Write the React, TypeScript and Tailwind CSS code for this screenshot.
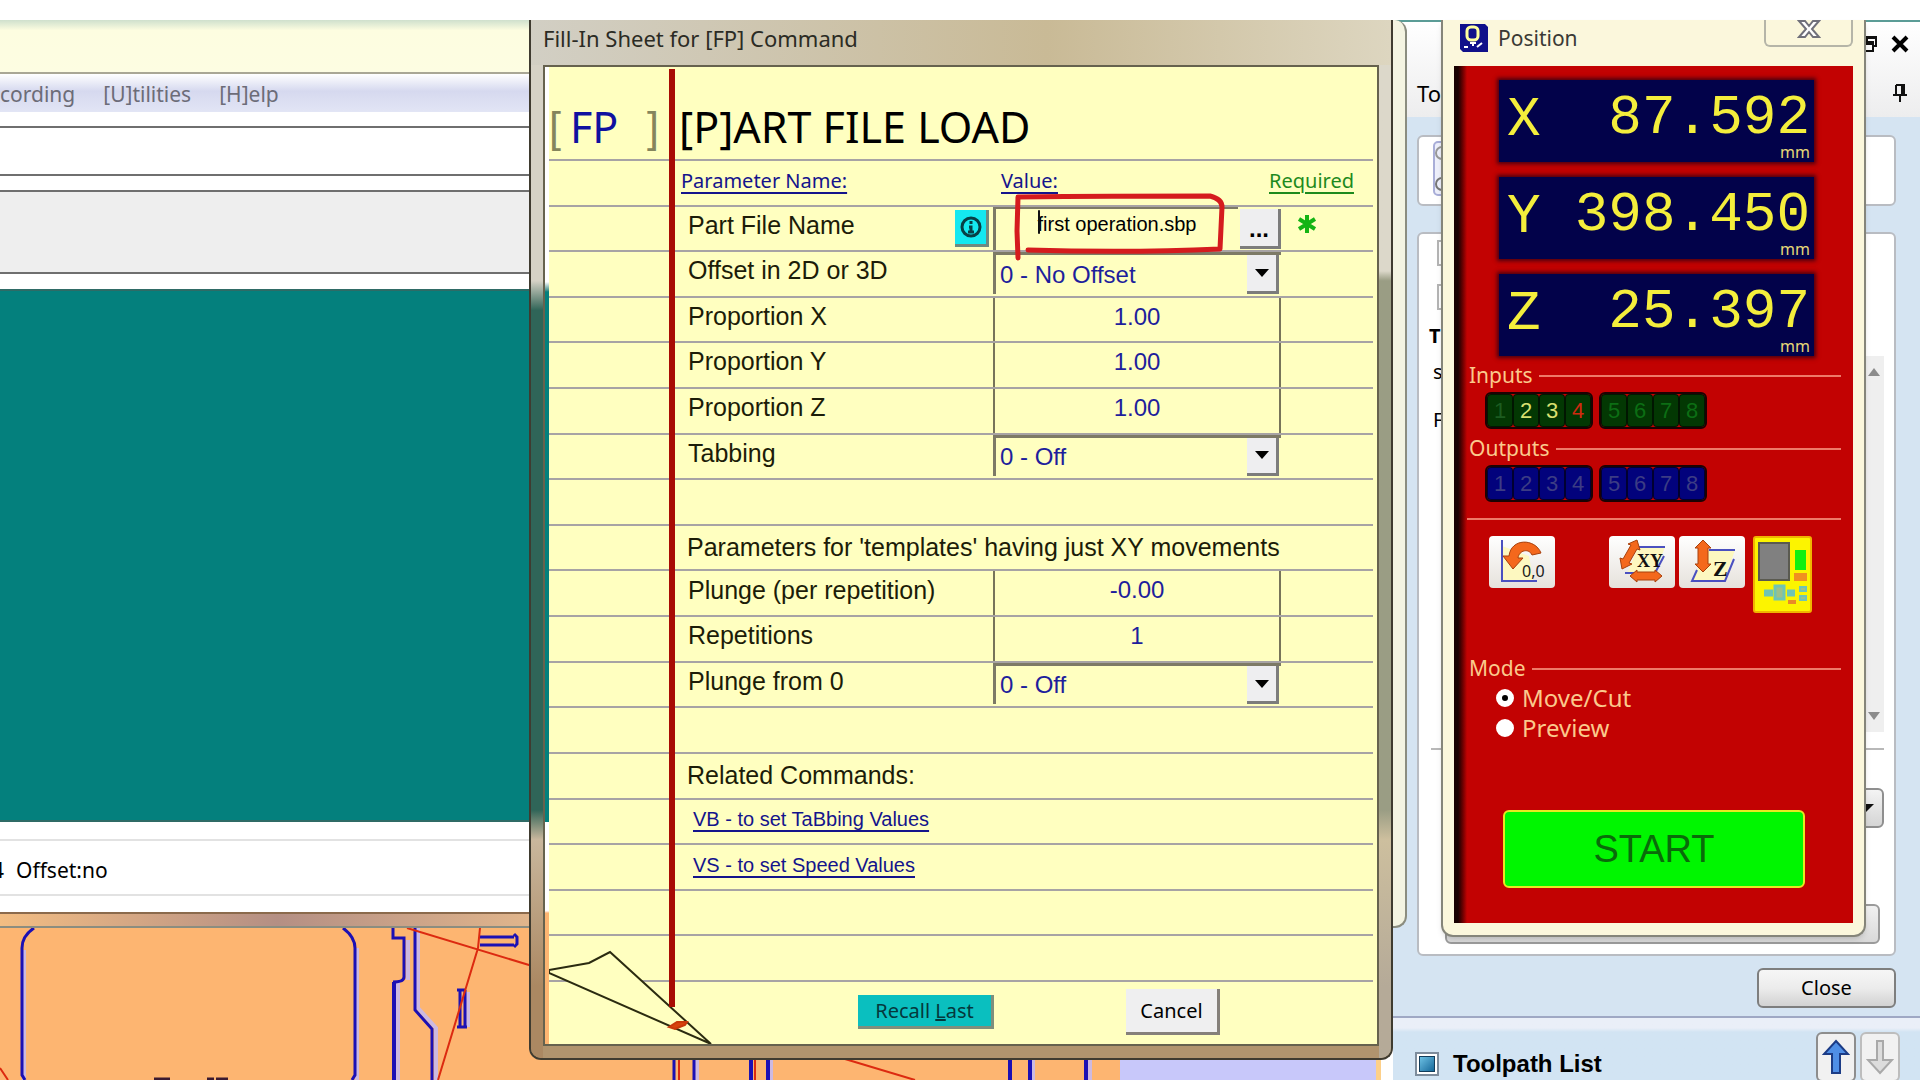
import React, { useState } from 'react';
import clsx from 'clsx';

const NOTO = "font-['Noto_Sans','Open_Sans',sans-serif]";
const ARIAL = "font-['Liberation_Sans',Arial,sans-serif]";
const MONO = "font-['Liberation_Mono',monospace]";

interface FieldRow {
  id: string;
  label: string;
  kind: 'number' | 'select';
  value: string;
}

const MAIN_FIELDS: FieldRow[] = [
  { id: 'offset', label: 'Offset in 2D or 3D', kind: 'select', value: '0 - No Offset' },
  { id: 'prop-x', label: 'Proportion X', kind: 'number', value: '1.00' },
  { id: 'prop-y', label: 'Proportion Y', kind: 'number', value: '1.00' },
  { id: 'prop-z', label: 'Proportion Z', kind: 'number', value: '1.00' },
  { id: 'tabbing', label: 'Tabbing', kind: 'select', value: '0 - Off' },
];

const TEMPLATE_FIELDS: FieldRow[] = [
  { id: 'plunge', label: 'Plunge (per repetition)', kind: 'number', value: '-0.00' },
  { id: 'repetitions', label: 'Repetitions', kind: 'number', value: '1' },
  { id: 'plunge-zero', label: 'Plunge from 0', kind: 'select', value: '0 - Off' },
];

const AXES = [
  { axis: 'X', value: '87.592' },
  { axis: 'Y', value: '398.450' },
  { axis: 'Z', value: '25.397' },
];

/* ---------- Background CAM application ---------- */

const ToolpathDrawing: React.FC = () => (
  <svg className="block h-[152px] w-full shrink-0" viewBox="0 0 1381 152" preserveAspectRatio="xMinYMin slice" fill="none">
    <rect width="1381" height="152" fill="#fdb571" />
    <rect x="1120" width="256" height="152" fill="#c8c8fa" />
    <rect x="1376" width="5" height="152" fill="#fdd08a" />
    {/* Light offset edge beside each vector */}
    <g stroke="#cdb9e0" strokeWidth="4">
      <path d="M24 152V22M357 20V152M398 54V152M408 12V52M418 0V80L436 100V152M468 64V99" />
      <path d="M697 131V152M771 131V152M1033 131V152M1090 131V152" />
    </g>
    <g stroke="#1c10b4" strokeWidth="3">
      <path d="M34 0C25 6 22 12 22 20V147L25 152M343 0C351 6 355 12 355 20V147L352 152" />
      <path d="M393 0V10H404V49Q404 54 393 54" />
      <path d="M394 54V152" strokeWidth="4" />
      <path d="M415 0V82L432 101V152" />
      <path d="M480 9H514M480 17H514M514 6L517 9V16L514 19" />
      <path d="M457 62H466M460 62V98M465 62V98M457 99H467" />
      <path d="M674 131V152M694 131V152" />
      <path d="M751 131V152M768 131V152M1010 131V152M1030 131V152M1086 131V152" strokeWidth="4" />
    </g>
    <g stroke="#dc2a10" strokeWidth="2">
      <path d="M407 0L529 37L549 42M480 0L478 20L438 152M0 140L8 152M845 131L915 152M679 131V152M755 131V152" />
    </g>
    <path d="M154 151H170M207 151H214M216 151H228" stroke="#3a1a30" strokeWidth="3" />
  </svg>
);

const TaskPanel: React.FC = () => (
  <aside className={clsx('flex w-[527px] shrink-0 flex-col bg-[#d5e4f2] text-black', NOTO)}>
    <header className="flex h-[97px] flex-col justify-between border-t-2 border-[#5b9c96] bg-linear-to-b from-white to-[#ededee] pr-2.5 pb-2.5 pl-6">
      <div className="flex items-center justify-end gap-3 pt-3">
        <svg className="h-5 w-4" viewBox="0 0 16 20" fill="none" stroke="#111" strokeWidth="2">
          <path d="M5 7V3H14V12H11M2 8H11V17H2ZM2 10H11M5 4H14" />
        </svg>
        <svg className="h-5 w-5" viewBox="0 0 20 20" stroke="#000" strokeWidth="4">
          <path d="M3 3L17 17M17 3L3 17" />
        </svg>
      </div>
      <div className="flex items-center justify-between text-[22px] leading-7">
        <span>Toolpaths</span>
        <svg className="h-5 w-5" viewBox="0 0 20 20" fill="none" stroke="#111" strokeWidth="2">
          <path d="M6 2H14V11M6 2V11M3 12H17M10 12V19M12 2V11" />
        </svg>
      </div>
    </header>

    <div className="flex flex-1 flex-col gap-[26px] pt-[18px] pr-[24px] pl-6">
      <div className="h-[71px] rounded-md border-2 border-[#b9bcc2] bg-white pt-1 pl-3.5">
        <svg className="h-14 w-10" viewBox="0 0 40 56" fill="none" stroke="#a9aed8" strokeWidth="2">
          <rect x="1" y="1" width="38" height="53" rx="4" fill="#eef0fb" />
          <circle cx="9" cy="12" r="6" stroke="#999" />
          <circle cx="9" cy="43" r="6" stroke="#777" />
          <path d="M9 18V37" stroke="#888" />
        </svg>
      </div>
      <div className="flex flex-1 flex-col rounded-md border-2 border-[#b9bcc2] bg-white pr-2.5 pl-[18px]">
        <div className="flex flex-1">
          <div className="flex-1">
            <div className="mt-1.5 size-[26px] border-2 border-[#b5b5b5]" />
            <div className="mt-[18px] size-[26px] border-2 border-[#b5b5b5]" />
            <p className="mt-3 -ml-2 text-xl font-bold">T</p>
            <p className="mt-2 -ml-1 text-xl">s</p>
            <p className="mt-5 -ml-1 text-xl">F</p>
          </div>
          <div className="mt-[122px] flex w-[20px] flex-col items-center justify-between bg-[#efefef] py-3 text-[#8c8c8c]">
            <svg className="h-2 w-3" viewBox="0 0 12 8"><path d="M6 0L12 8H0Z" fill="currentColor" /></svg>
            <svg className="h-2 w-3" viewBox="0 0 12 8"><path d="M6 8L12 0H0Z" fill="currentColor" /></svg>
          </div>
        </div>
        <div className="mt-4 -ml-1.5 h-0.5 bg-[#b8b8b8]" />
        <div className="mt-[38px] ml-2 flex h-10 items-center justify-end rounded-md border-2 border-[#8f8f8f] bg-linear-to-b from-[#f4f4f4] to-[#d5d5d5] pr-2">
          <svg className="h-2 w-4" viewBox="0 0 16 8"><path d="M8 8L16 0H0Z" fill="#111" /></svg>
        </div>
        <div className="mt-[76px] mr-1 mb-2.5 ml-2 h-10 rounded-md border-2 border-[#9b9b9b] bg-linear-to-b from-[#f1f1f1] to-[#d9d9d9]" />
      </div>
    </div>

    <div className="flex justify-end pt-3 pr-6 pb-2">
      <button className="h-10 w-[139px] rounded-md border-2 border-[#7e7e7e] bg-linear-to-b from-[#f6f6f6] via-[#ececec] to-[#d2d2d2] text-[20px]">
        Close
      </button>
    </div>

    <div className="flex h-[64px] shrink-0 items-start justify-between border-t-2 border-[#9fa8c4] bg-linear-to-b from-[#eaeff8] from-[10px] to-[#d2e4f3] to-[14px] pt-3.5 pr-5 pl-[22px]">
      <div className={clsx('flex items-center gap-3.5 pt-4 text-2xl font-bold', ARIAL)}>
        <span className="flex size-6 items-center justify-center border-2 border-[#7d8c9c] bg-white">
          <span className="size-4 border border-[#123c5a] bg-linear-to-br from-[#6cc1e4] to-[#12699a]" />
        </span>
        <h2>Toolpath List</h2>
      </div>
      <div className="flex gap-1">
        <button aria-label="Move up" className="flex h-[50px] w-10 items-center justify-center rounded-md border-2 border-[#8d8d8d] bg-[#f1f1f1]">
          <svg className="h-9 w-7" viewBox="0 0 28 36">
            <path d="M14 2L26 15H18V34H10V15H2Z" fill="#4f8fe6" stroke="#1c3c86" strokeWidth="2" />
          </svg>
        </button>
        <button aria-label="Move down" className="flex h-[50px] w-10 items-center justify-center rounded-md border-2 border-[#bdbdbd] bg-[#f1f1f1]">
          <svg className="h-9 w-7" viewBox="0 0 28 36">
            <path d="M14 34L26 21H17V2H11V21H2Z" fill="#dcdcdc" stroke="#a9a9a9" strokeWidth="2" />
          </svg>
        </button>
      </div>
    </div>
  </aside>
);

/* ---------- Control software window behind the dialog ---------- */

const ControlWindow: React.FC = () => (
  <section className={clsx('absolute top-5 right-[513px] left-0 flex h-[908px] flex-col overflow-hidden rounded-r-xl border-r-2 border-b-2 border-[#8b8d80] bg-[#f4f4e2] pr-5 text-[21px]', NOTO)}>
    <div className="h-[54px] shrink-0 border-b-2 border-[#a9a795] bg-linear-to-b from-[#cfe0cd] via-[#fdfde0] via-20% to-[#fdfde2]" />
    <nav className="flex h-[38px] shrink-0 items-center gap-7 bg-linear-to-b from-white via-[#d6d9ef] via-45% to-[#e2e5f5] pt-1 text-[#6c6c78]">
      <span>cording</span>
      <span>[U]tilities</span>
      <span>[H]elp</span>
    </nav>
    <div className="flex flex-1 flex-col bg-white pt-[14px]">
      <div className="h-[50px] shrink-0 border-y-2 border-[#6f6f6f] bg-white" />
      <div className="mt-3.5 h-[84px] shrink-0 border-y-2 border-[#6f6f6f] bg-[#eeeeee]" />
      <div className="mt-[15px] flex-1 border-y-2 border-[#2f6b66] bg-[#04807d]" />
      <div className="mt-[17px] mb-4 flex h-[57px] shrink-0 items-center gap-3 border-y-2 border-[#e2e2e2] pt-1.5">
        <span className="-ml-2">4</span>
        <span>Offset:no</span>
      </div>
    </div>
    <div className="h-[14px] shrink-0 border-t-2 border-[#8b6a4c] bg-linear-to-r from-[#f3bd82] via-[#b48f84] via-20% to-[#e5b98c] to-40%" />
  </section>
);

/* ---------- Fill-in sheet dialog ---------- */

const RULED = 'grid min-h-0 grid-cols-[126px_318px_288px_1fr] border-b-2 border-[#a7a3a4]';

const SheetSelect: React.FC<{ id: string; value: string }> = ({ id, value }) => (
  <div className="relative mb-0.5 flex border-t-3 border-l-3 border-[#7d7a66]">
    <select id={id} defaultValue={value} className="w-full appearance-none bg-[#ffffc0] pl-1 text-2xl text-[#1e1e9c] outline-none">
      <option>{value}</option>
    </select>
    <span className="pointer-events-none absolute inset-y-0 right-0.5 flex w-8 items-center justify-center border-r-3 border-b-3 border-[#7c7c7c] bg-[#eeeef0]">
      <svg className="h-2 w-3.5" viewBox="0 0 14 8"><path d="M0 0H14L7 8Z" fill="#000" /></svg>
    </span>
  </div>
);

const SheetRow: React.FC<{ field: FieldRow }> = ({ field }) => (
  <div className={RULED}>
    <label htmlFor={field.id} className="col-start-2 flex items-center pb-1.5 pl-[13px] text-[25px]">
      {field.label}
    </label>
    {field.kind === 'select' ? (
      <SheetSelect id={field.id} value={field.value} />
    ) : (
      <input
        id={field.id}
        defaultValue={field.value}
        className="w-full min-w-0 border-x-2 border-[#77745a] bg-transparent pb-1.5 text-center text-2xl text-[#1e1e9c] outline-none"
      />
    )}
  </div>
);

const FillInSheet: React.FC = () => (
  <section className={clsx('absolute top-5 right-[527px] bottom-5 left-[529px] flex flex-col overflow-hidden rounded-b-xl border-2 border-t-0 border-[#3f3b30] bg-[#b1946e] pb-3 text-[#1c1c08]', NOTO)}>
    <h1 className="h-[45px] shrink-0 bg-linear-to-r from-[#d2cfc4] via-[#c9ba96] via-60% to-[#ddd6c0] px-3 pt-1 text-[22px] leading-7 text-[#2b2b24]">
      Fill-In Sheet for [FP] Command
    </h1>
    <div className="flex min-h-0 flex-1">
      <div className="w-3 bg-linear-to-b from-[#d6d2c6] from-22% via-[#2f6558] via-25% to-[#2f6558] to-76%">
        <div className="mt-[745px] h-full bg-linear-to-b from-[#2f6558] via-[#c9b79d] via-3% to-[#ab8862] to-18%" />
      </div>
      <div className="relative flex min-w-0 flex-1 flex-col border-2 border-[#66624e] bg-[#ffffc0]">
        {/* Strip of the windows behind, left of the page */}
        <div className="absolute inset-y-0 left-0 w-1 bg-linear-to-b from-white from-22% via-[#04807d] via-23% to-[#04807d] to-77%" />
        <div className="absolute bottom-0 left-0 h-[222px] w-1 bg-linear-to-b from-white from-40% to-[#fdb571] to-41%" />

        <div className="mr-1 ml-1 flex h-[94px] shrink-0 items-end border-b-2 border-[#a7a3a4] pb-1 text-[43px] leading-[56px]">
          <div className="flex w-[126px] justify-between pr-[16px] text-[#1010a0]">
            <span className={clsx('text-[#85855c]', ARIAL)}>[</span>
            <span className="w-[68px]">FP</span>
            <span className={clsx('text-[#85855c]', ARIAL)}>]</span>
          </div>
          <h2 className="pl-1 whitespace-nowrap text-black">[P]ART FILE LOAD</h2>
        </div>

        <div className={clsx('mr-1 ml-1 grid min-h-0 flex-1 auto-rows-fr', ARIAL)}>
          <div className={clsx(RULED, NOTO, 'items-center pb-1 text-xl text-[#14148c]')}>
            <span className="col-start-2 pl-1.5 underline underline-offset-4">Parameter Name:</span>
            <span className="pl-2 underline underline-offset-4">Value:</span>
            <span className="-ml-3 text-[#1d8a1d] underline underline-offset-4">Required</span>
          </div>

          <div className={RULED}>
            <div className="col-start-2 flex items-center justify-between pr-1 pl-[13px]">
              <label htmlFor="part-file" className="pb-1.5 text-[25px]">Part File Name</label>
              <button aria-label="Part file info" className="flex h-[37px] w-[34px] items-center justify-center border-r-3 border-b-3 border-[#6f8a80] bg-[#14e8f0]">
                <svg className="size-6" viewBox="0 0 24 24" fill="none" stroke="#073f46" strokeWidth="3">
                  <circle cx="12" cy="12" r="9" />
                  <path d="M12 6V9M10 12H12V17M9 17H15" />
                </svg>
              </button>
            </div>
            <div className="flex">
              <input
                id="part-file"
                defaultValue="first operation.sbp"
                className="min-w-0 flex-1 border-t-2 border-l-3 border-[#7d7a66] bg-transparent pb-2.5 text-center text-xl text-black outline-none"
              />
              <button aria-label="Browse" className="mt-0.5 ml-0.5 h-[40px] w-[41px] shrink-0 border-r-3 border-b-3 border-[#7c7c7c] bg-[#eeeef0] pt-1 text-2xl leading-none font-bold text-black">
                ...
              </button>
            </div>
            <span className="flex items-center pb-2 pl-4">
              <svg className="size-5" viewBox="0 0 20 20" stroke="#14b414" strokeWidth="4">
                <path d="M10 1V19M2 5L18 15M18 5L2 15" />
              </svg>
            </span>
          </div>

          {MAIN_FIELDS.map((field) => (
            <SheetRow key={field.id} field={field} />
          ))}

          <div className={RULED} />
          <div className={RULED}>
            <p className="col-span-3 col-start-2 flex items-center pl-3 text-[25px]">
              Parameters for 'templates' having just XY movements
            </p>
          </div>

          {TEMPLATE_FIELDS.map((field) => (
            <SheetRow key={field.id} field={field} />
          ))}

          <div className={RULED} />
          <div className={RULED}>
            <p className="col-start-2 flex items-center pl-3 text-[25px]">Related Commands:</p>
          </div>
          <div className={RULED}>
            <a href="#vb" className="col-start-2 self-center pb-1 pl-[18px] text-xl text-[#14148c] underline underline-offset-4">
              VB - to set TaBbing Values
            </a>
          </div>
          <div className={RULED}>
            <a href="#vs" className="col-start-2 self-center pb-1 pl-[18px] text-xl text-[#14148c] underline underline-offset-4">
              VS - to set Speed Values
            </a>
          </div>
          <div className={RULED} />
          <div className={RULED} />
        </div>

        <div className="flex h-[62px] shrink-0 items-center pb-0.5 pl-[313px] text-xl">
          <button className="h-[34px] w-[136px] border-r-3 border-b-3 border-[#7f8f7c] bg-[#0abfbf] leading-none text-[#05383c]">
            Recall <span className="underline">L</span>ast
          </button>
          <button className="ml-[132px] h-[46px] w-[94px] border-r-3 border-b-3 border-[#85807a] bg-[#efeff0] text-black">
            Cancel
          </button>
        </div>

        {/* Margin rule, page curl and the marker stroke round the file name */}
        <div className="absolute top-0.5 bottom-[37px] left-[124px] w-1.5 bg-[#a80c04]" />
        <svg className="absolute bottom-0 left-1 h-[94px] w-[164px]" viewBox="0 0 164 94" fill="none">
          <path d="M0 20L40 13L61 2L162 94L0 23Z" fill="#ffffc0" stroke="#2b2b10" strokeWidth="2" />
          <path d="M120 77L128 72H138L136 75L126 79Z" fill="#d8430c" stroke="#c8380a" strokeWidth="2" />
        </svg>
        <div className="absolute bottom-[37px] left-[124px] h-14 w-1.5 bg-[#a80c04]" />
        <svg className="pointer-events-none absolute top-[124px] left-[465px] h-[72px] w-[220px]" viewBox="0 0 220 72" fill="none" stroke="#d51b1e" strokeWidth="5" strokeLinecap="round" strokeLinejoin="round">
          <path d="M8 67L7 40L8 6Q100 5 200 5Q212 8 212 16L210 58Q120 62 18 59" />
          <path d="M29 20V42" stroke="#111" strokeWidth="2" />
        </svg>
      </div>
      <div className="w-3 bg-linear-to-b from-[#dcd8ca] from-21% via-[#9a9d84] via-22% to-[#9a9d84] to-76%">
        <div className="mt-[745px] h-full bg-linear-to-b from-[#9a9d84] via-[#cdbf9e] via-3% to-[#b5aa98] to-18%" />
      </div>
    </div>
  </section>
);

/* ---------- Position window ---------- */

const IoBank: React.FC<{ digits: string[]; cell: string; colours?: Record<string, string>; dim: string }> = ({
  digits,
  cell,
  colours = {},
  dim,
}) => (
  <div className="flex rounded-md border-2 border-[#1c0202]">
    {digits.map((d) => (
      <span
        key={d}
        className={clsx('flex h-[33px] w-[26px] items-center justify-center rounded-sm border border-black/60 text-[22px]', ARIAL, cell, colours[d] || dim)}
      >
        {d}
      </span>
    ))}
  </div>
);

const Legend: React.FC<{ text: string }> = ({ text }) => (
  <div className="flex h-7 items-center gap-1.5 pr-3 pl-0.5 text-[21px] text-[#fbc98c]">
    <span>{text}</span>
    <span className="h-0.5 flex-1 bg-[#ee7a68]" />
  </div>
);

const PositionWindow: React.FC = () => {
  const [mode, setMode] = useState('cut');

  return (
    <section className={clsx('absolute top-5 right-[54px] flex w-[425px] flex-col rounded-b-xl border-2 border-t-0 border-[#85857a] bg-[#fbf7dc] px-[11px] pb-3 shadow-md', NOTO)}>
      <header className="flex h-[46px] items-start justify-between">
        <div className="flex items-center gap-2.5 pt-1 pl-1.5 text-[21px] text-[#3a3a35]">
          <svg className="size-7" viewBox="0 0 28 28" fill="none">
            <path d="M0 0H25L28 3V28H3L0 25Z" fill="#10108a" />
            <rect x="7" y="3" width="11" height="13" rx="4" stroke="#ffffa0" strokeWidth="3" />
            <path d="M10 19H16M13 19V22M4 23H8M17 23L22 19" stroke="#fff" strokeWidth="2" />
          </svg>
          <h1 className="leading-7">Position</h1>
        </div>
        <button aria-label="Close position window" className="flex h-[27px] w-[89px] justify-center rounded-b-md border-2 border-t-0 border-[#b5b5a8]">
          <svg className="h-5 w-6" viewBox="0 0 24 20">
            <path d="M2 1H8L12 6L16 1H22L15 9L22 17H16L12 12L8 17H2L9 9Z" fill="#fff" stroke="#70707a" strokeWidth="2" />
          </svg>
        </button>
      </header>

      <div className="bg-[#c20202] bg-linear-to-r from-[#180000] from-[4px] to-[#c20202] to-[13px] pl-[13px]">
        <div className="flex flex-col gap-[15px] pt-3.5 pr-[39px] pl-8">
          {AXES.map(({ axis, value }) => (
            <div key={axis} className="h-[82px] bg-[#02024a] pt-1.5 pr-1 pl-2 shadow-[0_0_4px_2px_#4a0010]">
              <div className={clsx('flex h-[58px] justify-between text-[56px] leading-none text-[#f4ee3c]', MONO)}>
                <span className="pt-1.5">{axis}</span>
                <span className="pt-1">{value}</span>
              </div>
              <p className="text-right text-base leading-4 text-[#e6d878]">mm</p>
            </div>
          ))}
        </div>

        <div className="pt-1.5">
          <Legend text="Inputs" />
          <div className="flex gap-1.5 pt-0.5 pl-[18px]">
            <IoBank digits={['1', '2', '3', '4']} cell="bg-[#033803]" dim="text-[#1c5c20]" colours={{ '2': 'text-[#d8e070]', '3': 'text-[#d8e070]', '4': 'text-[#d02a10]' }} />
            <IoBank digits={['5', '6', '7', '8']} cell="bg-[#033803]" dim="text-[#0c6e14]" />
          </div>
        </div>
        <div className="pt-1.5">
          <Legend text="Outputs" />
          <div className="flex gap-1.5 pt-0.5 pl-[18px]">
            <IoBank digits={['1', '2', '3', '4']} cell="bg-[#02027c]" dim="text-[#3c3c84]" />
            <IoBank digits={['5', '6', '7', '8']} cell="bg-[#02027c]" dim="text-[#3c3c84]" />
          </div>
        </div>

        <div className="mt-4 mr-3 h-0.5 bg-[#ee7a68]" />

        <div className="flex items-start pt-4 pl-[22px]">
          <button aria-label="Go to zero" className="h-[52px] w-[66px] rounded-sm bg-linear-to-b from-white to-[#e6e2dc]">
            <svg className="h-[52px] w-[66px]" viewBox="0 0 66 52">
              <path d="M13 10L40 20L44 44H13Z" fill="#fdf8c0" />
              <path d="M13 4V45H48" fill="none" stroke="#4a50c0" strokeWidth="2" />
              <path d="M52 17C46 2 22 2 20 20H14L24 33L34 22H29C30 14 40 12 43 19Z" fill="#f4681c" stroke="#a8400c" strokeWidth="1" />
              <text x="33" y="41" fontSize="16" fontFamily="Noto Sans" fill="#1a1a1a">0,0</text>
            </svg>
          </button>
          <button aria-label="Zero X and Y" className="ml-[54px] h-[52px] w-[66px] rounded-sm bg-linear-to-b from-white to-[#e6e2dc]">
            <svg className="h-[52px] w-[66px]" viewBox="0 0 66 52">
              <path d="M29 11H56L46 38H18Z" fill="#fdf8c0" />
              <path d="M30 11H56M55 20L46 37M16 37H26" fill="none" stroke="#4a50c0" strokeWidth="2" />
              <path d="M28 4L31 14L28 13L20 27L23 28L13 33L11 22L14 23L22 9L19 8Z" fill="#f4681c" stroke="#a8400c" strokeWidth="1" />
              <path d="M21 40L28 34V36H46V34L53 40L46 46V44H28V46Z" fill="#f4681c" stroke="#a8400c" strokeWidth="1" />
              <text x="28" y="31" fontSize="18" fontWeight="700" fontFamily="Liberation Serif" fill="#111">XY</text>
            </svg>
          </button>
          <button aria-label="Zero Z" className="ml-1 h-[52px] w-[66px] rounded-sm bg-linear-to-b from-white to-[#e6e2dc]">
            <svg className="h-[52px] w-[66px]" viewBox="0 0 66 52">
              <path d="M28 14H56L45 45H13Z" fill="#fdf8c0" />
              <path d="M30 14H56M55 23L46 45H13L18 34" fill="none" stroke="#4a50c0" strokeWidth="2" />
              <path d="M24 4L32 12H29V28H32L24 36L16 28H19V12H16Z" fill="#f4681c" stroke="#a8400c" strokeWidth="1" />
              <text x="34" y="40" fontSize="22" fontWeight="700" fontFamily="Liberation Serif" fill="#111">Z</text>
            </svg>
          </button>
          <button aria-label="Keypad" className="ml-2 h-[77px] w-[59px]">
            <svg className="h-[77px] w-[59px]" viewBox="0 0 59 77">
              <rect x="1" y="1" width="57" height="75" rx="2" fill="#fcf400" stroke="#f0b400" strokeWidth="2" />
              <rect x="6" y="7" width="30" height="37" fill="#808080" stroke="#5a5a50" strokeWidth="2" />
              <rect x="42" y="14" width="11" height="20" fill="#10f010" />
              <rect x="41" y="37" width="13" height="8" fill="#f09020" />
              <path d="M22 50H31V63H22Z" fill="#9cc08c" stroke="#6fc4b4" strokeWidth="3" />
              <path d="M11 57H20M34 57H42" stroke="#6fc4b4" strokeWidth="7" />
              <path d="M47 51H53V55H47ZM47 60H53V64H47Z" fill="#9cc08c" stroke="#6fc4b4" strokeWidth="2" />
              <path d="M35 66H43" stroke="#e88a28" strokeWidth="4" />
            </svg>
          </button>
        </div>

        <fieldset className="pt-[42px]">
          <Legend text="Mode" />
          <label className="flex h-[30px] items-center gap-2 pl-[29px] text-2xl text-[#fbc98c]">
            <input type="radio" name="mode" checked={mode === 'cut'} onChange={() => setMode('cut')} className="size-[18px] appearance-none rounded-full border-[6px] border-white bg-white checked:bg-black" />
            Move/Cut
          </label>
          <label className="flex h-[30px] items-center gap-2 pl-[29px] text-2xl text-[#fbc98c]">
            <input type="radio" name="mode" checked={mode === 'preview'} onChange={() => setMode('preview')} className="size-[18px] appearance-none rounded-full border-[6px] border-white bg-white checked:bg-black" />
            Preview
          </label>
        </fieldset>

        <div className="pt-[67px] pr-[48px] pb-[35px] pl-9">
          <button className={clsx('h-[78px] w-full rounded-md border-2 border-[#e8e820] bg-[#00f600] text-[38px] leading-none text-[#0a6a0a]', ARIAL)}>
            START
          </button>
        </div>
      </div>
    </section>
  );
};

const App: React.FC = () => (
  <main className="relative flex h-screen overflow-hidden bg-white pt-5">
    <div className="flex min-w-0 flex-1 flex-col justify-end pr-3">
      <ToolpathDrawing />
    </div>
    <TaskPanel />
    <ControlWindow />
    <FillInSheet />
    <PositionWindow />
  </main>
);

export default App;
